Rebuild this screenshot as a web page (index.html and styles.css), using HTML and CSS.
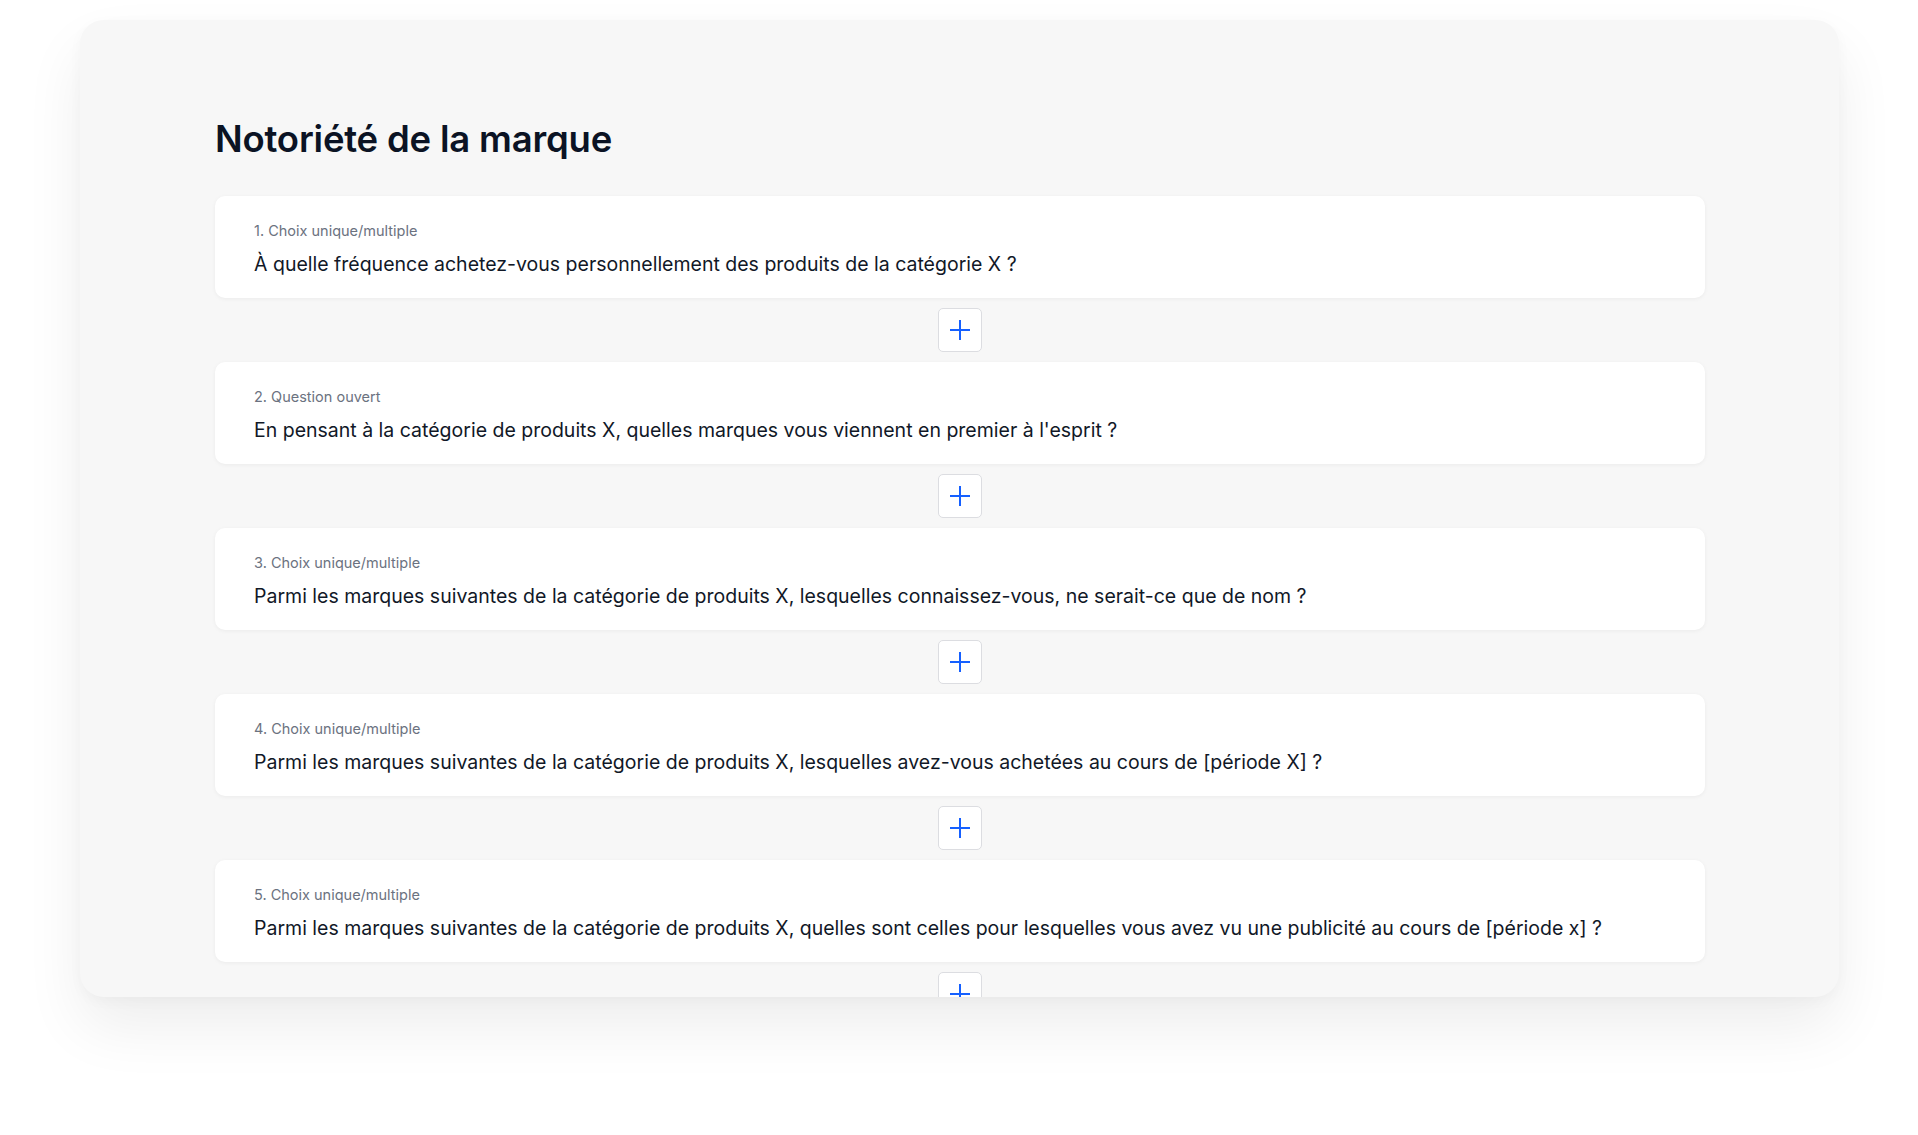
FILE: index.html
```html
<!DOCTYPE html>
<html lang="fr">
<head>
  <meta charset="utf-8">
  <title>Notoriété de la marque</title>
  <link rel="stylesheet" href="styles.css">
</head>
<body>
  <div class="page">
    <div class="panel">
      <h1 class="title">Notoriété de la marque</h1>

      <div class="question">
        <div class="q-type">1. Choix unique/multiple</div>
        <div class="q-text">À quelle fréquence achetez-vous personnellement des produits de la catégorie X ?</div>
      </div>
      <div class="add-row"><button class="add-btn"><svg width="20" height="20" viewBox="0 0 20 20"><path d="M10 0v20M0 10h20" stroke="#1560ff" stroke-width="2"/></svg></button></div>

      <div class="question">
        <div class="q-type">2. Question ouvert</div>
        <div class="q-text">En pensant à la catégorie de produits X, quelles marques vous viennent en premier à l'esprit ?</div>
      </div>
      <div class="add-row"><button class="add-btn"><svg width="20" height="20" viewBox="0 0 20 20"><path d="M10 0v20M0 10h20" stroke="#1560ff" stroke-width="2"/></svg></button></div>

      <div class="question">
        <div class="q-type">3. Choix unique/multiple</div>
        <div class="q-text">Parmi les marques suivantes de la catégorie de produits X, lesquelles connaissez-vous, ne serait-ce que de nom ?</div>
      </div>
      <div class="add-row"><button class="add-btn"><svg width="20" height="20" viewBox="0 0 20 20"><path d="M10 0v20M0 10h20" stroke="#1560ff" stroke-width="2"/></svg></button></div>

      <div class="question">
        <div class="q-type">4. Choix unique/multiple</div>
        <div class="q-text">Parmi les marques suivantes de la catégorie de produits X, lesquelles avez-vous achetées au cours de [période X] ?</div>
      </div>
      <div class="add-row"><button class="add-btn"><svg width="20" height="20" viewBox="0 0 20 20"><path d="M10 0v20M0 10h20" stroke="#1560ff" stroke-width="2"/></svg></button></div>

      <div class="question">
        <div class="q-type">5. Choix unique/multiple</div>
        <div class="q-text">Parmi les marques suivantes de la catégorie de produits X, quelles sont celles pour lesquelles vous avez vu une publicité au cours de [période x] ?</div>
      </div>
      <div class="add-row"><button class="add-btn"><svg width="20" height="20" viewBox="0 0 20 20"><path d="M10 0v20M0 10h20" stroke="#1560ff" stroke-width="2"/></svg></button></div>
    </div>
  </div>
</body>
</html>
```

FILE: styles.css
```css
html, body {
  margin: 0;
  background: #ffffff;
  font-family: Inter, "Noto Sans", sans-serif;
}

.page {
  padding: 20px 79px 0 80px;
  height: 1115px;
}

.panel {
  height: 977px;
  box-sizing: border-box;
  padding: 97px 134px 0 135px;
  background: #f7f7f7;
  border-radius: 24px;
  overflow: hidden;
  box-shadow: 0 30px 60px rgba(0, 0, 0, 0.07), 0 4px 14px rgba(0, 0, 0, 0.03);
}

.title {
  margin: 0 0 35px;
  font-size: 36.5px;
  line-height: 44px;
  font-weight: 600;
  color: #0b1324;
  letter-spacing: -0.2px;
}

.question {
  display: flex;
  flex-direction: column;
  gap: 9px;
  height: 102px;
  box-sizing: border-box;
  padding: 25px 39px 20px;
  background: #ffffff;
  border-radius: 10px;
  box-shadow: 0 1px 4px rgba(0, 0, 0, 0.05);
}

.q-type {
  font-size: 14.5px;
  line-height: 20px;
  color: #6b7280;
}

.q-text {
  font-size: 19.5px;
  line-height: 28px;
  color: #111827;
}

.add-row {
  display: flex;
  justify-content: center;
  padding: 10px 0;
}

.add-btn {
  width: 44px;
  height: 44px;
  padding: 0;
  display: flex;
  align-items: center;
  justify-content: center;
  background: #ffffff;
  border: 1px solid #dcdde1;
  border-radius: 5px;
}
```
